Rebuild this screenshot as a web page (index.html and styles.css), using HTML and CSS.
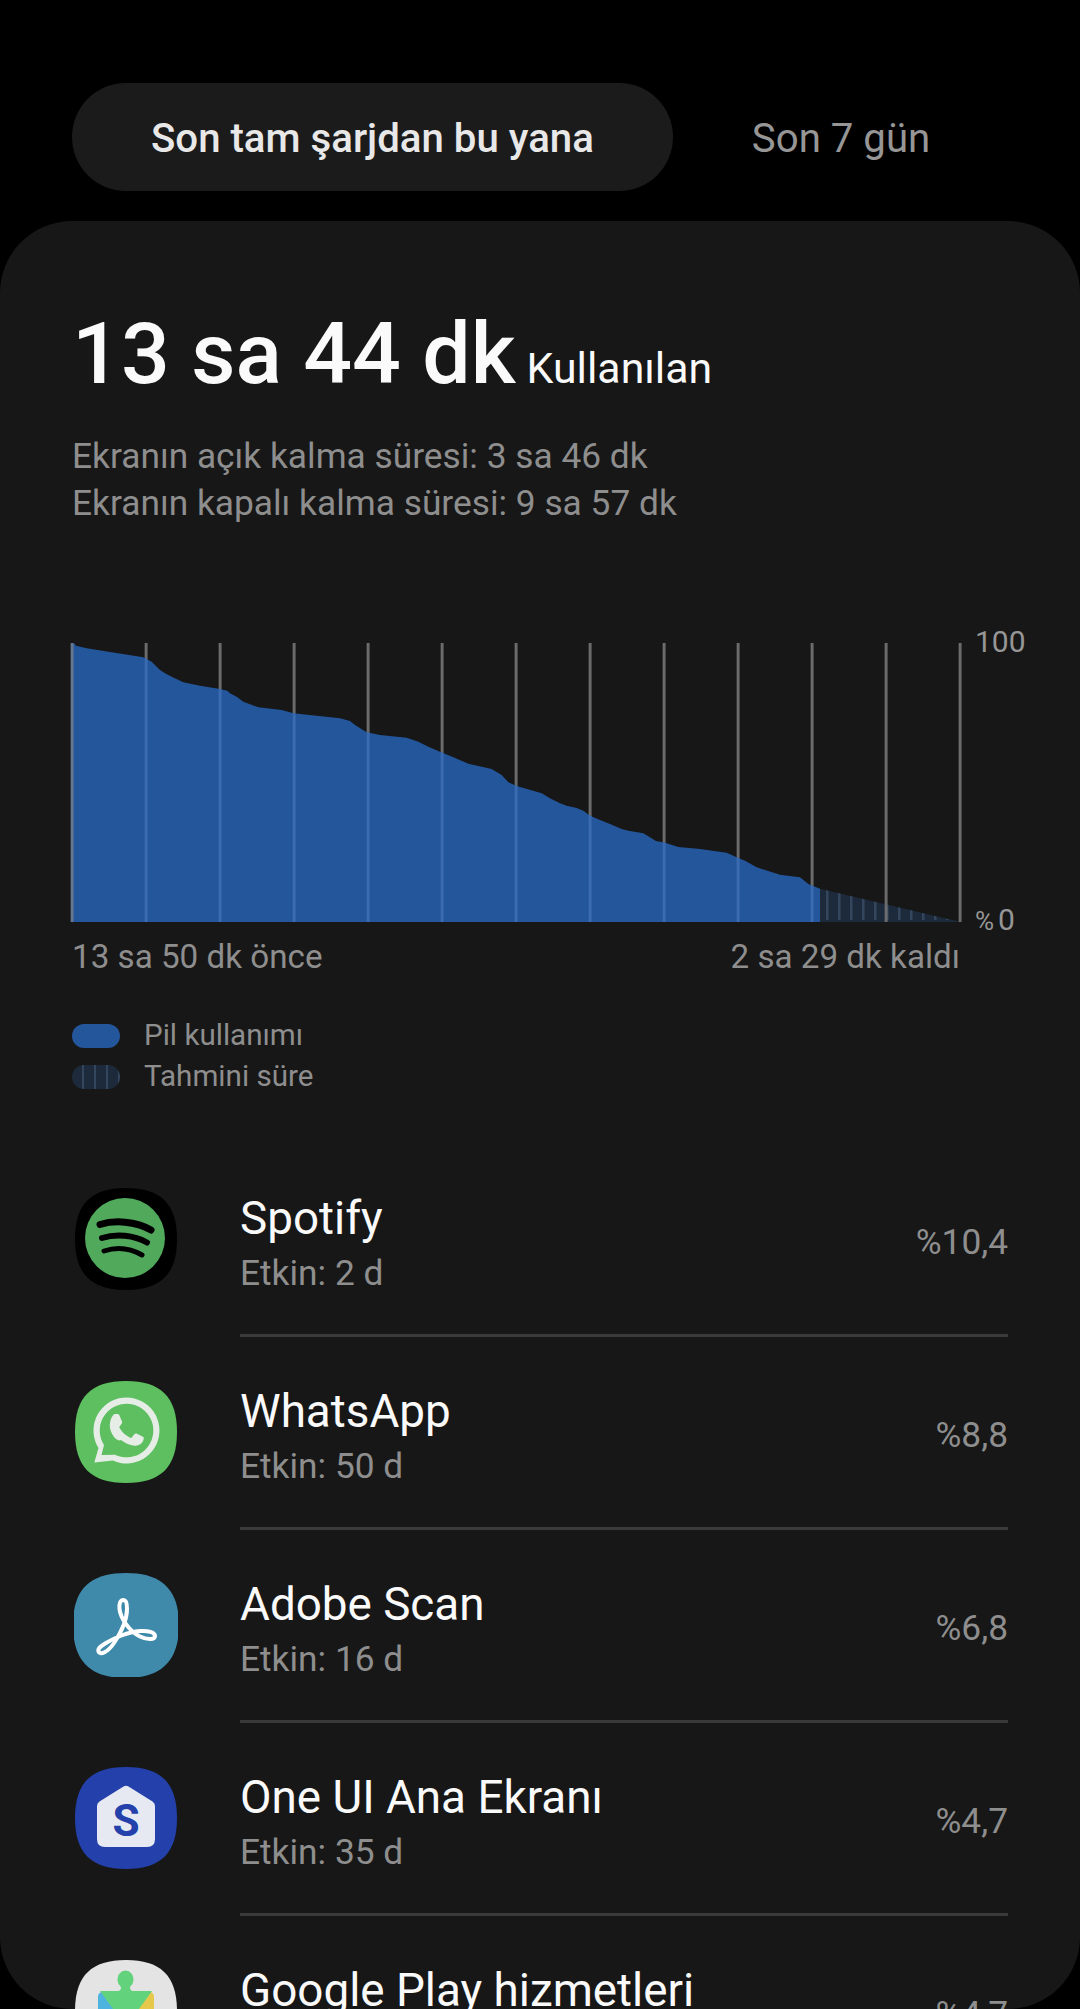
FILE: index.html
```html
<!DOCTYPE html>
<html lang="tr">
<head>
    <meta charset="UTF-8">
    <meta name="viewport" content="width=device-width, initial-scale=1.0">
    <title>Pil kullanımı</title>
    <link rel="stylesheet" href="styles.css">
</head>
<body>
    <div class="tabs">
        <div class="tab tab-active">Son tam şarjdan bu yana</div>
        <div class="tab">Son 7 gün</div>
    </div>

    <div class="card">
        <div class="total">
            <span class="total-time">13 sa 44 dk</span>
            <span class="total-label">Kullanılan</span>
        </div>
        <div class="screen-times">
            <div>Ekranın açık kalma süresi: 3 sa 46 dk</div>
            <div>Ekranın kapalı kalma süresi: 9 sa 57 dk</div>
        </div>

        <div class="chart">
            <!-- viewBox is 3x page pixels -->
            <svg class="plot" width="892" height="279" viewBox="60 69 2676 837">
                <defs>
                    <pattern id="gridGrey" x="62" y="69" width="222" height="837" patternUnits="userSpaceOnUse">
                        <rect width="8.5" height="837" fill="#6e6e6e"/>
                    </pattern>
                    <pattern id="gridBlue" x="62" y="69" width="222" height="837" patternUnits="userSpaceOnUse">
                        <rect width="8.5" height="837" fill="#3b6bb0"/>
                    </pattern>
                    <pattern id="stripes" x="2328" y="69" width="36" height="837" patternUnits="userSpaceOnUse">
                        <rect width="7.5" height="837" fill="#33465e"/>
                    </pattern>
                    <clipPath id="usedClip">
                        <path d="M62 69L72 70L78 77L110 85L180 96L280 112L305 125L330 150L345 160L365 170L400 187L450 197L510 207L532 212L540 220L560 230L580 245L625 262L695 270L730 280L800 287L870 295L900 303L915 315L950 337L990 345L1070 353L1105 365L1135 380L1170 395L1210 412L1255 431L1325 447L1355 465L1375 487L1400 498L1475 520L1500 535L1530 550L1550 557L1580 564L1600 572L1620 587L1650 600L1680 612L1715 627L1735 632L1780 640L1818 663L1845 668L1885 681L1950 687L2030 698L2065 714L2085 722L2120 742L2190 764L2250 772L2275 792L2310 806L2310 906L62 906Z"/>
                    </clipPath>
                    <clipPath id="leftClip">
                        <path d="M2310 806L2730 906L2310 900Z"/>
                    </clipPath>
                </defs>
                <path d="M2310 806L2732 906L2310 906Z" fill="#1c2a3c"/>
                <rect x="2310" y="69" width="426" height="831" fill="url(#stripes)" clip-path="url(#leftClip)"/>
                <rect x="60" y="69" width="2676" height="837" fill="url(#gridGrey)"/>
                <g clip-path="url(#usedClip)">
                    <rect x="60" y="69" width="2676" height="837" fill="#24569c"/>
                    <rect x="71" y="69" width="2676" height="837" fill="url(#gridBlue)"/>
                    <rect x="62" y="69" width="8.5" height="837" fill="#66768c"/>
                </g>
            </svg>
            <div class="axis">
                <span>100</span>
                <span><span class="axis-percent">%</span>0</span>
            </div>
        </div>
        <div class="chart-range">
            <span>13 sa 50 dk önce</span>
            <span>2 sa 29 dk kaldı</span>
        </div>

        <div class="legend">
            <div class="legend-row"><span class="swatch swatch-used"></span>Pil kullanımı</div>
            <div class="legend-row"><span class="swatch swatch-left"></span>Tahmini süre</div>
        </div>

        <div class="app-row">
            <svg class="app-icon" viewBox="0 0 104 104">
                <path d="M52 1C87 1 103 17 103 52S87 103 52 103 1 87 1 52 17 1 52 1Z" fill="#000"/>
                <circle cx="51" cy="51" r="40" fill="#51a95c"/>
                <g fill="none" stroke="#000" stroke-linecap="round">
                    <path d="M26 37.5C40 33 62 34 77 43" stroke-width="7"/>
                    <path d="M28 51C42 46.500 60 48 73 55.500" stroke-width="6"/>
                    <path d="M30 64C42 60 56 61 68 68" stroke-width="5"/>
                </g>
            </svg>
            <div class="app-body">
                <div class="app-text">
                    <div class="app-name">Spotify</div>
                    <div class="app-time">Etkin: 2 d</div>
                </div>
                <div class="app-percent">%10,4</div>
            </div>
        </div>

        <div class="app-row">
            <svg class="app-icon" viewBox="0 0 104 104">
                <path d="M52 1C87 1 103 17 103 52S87 103 52 103 1 87 1 52 17 1 52 1Z" fill="#5dbf60"/>
                <path fill-rule="evenodd" fill="#e6ece6" d="M20.300 82.500L24.500 68A33 33 0 1 1 39 80.600ZM27.500 75L30 65A26.800 26.800 0 1 1 41 74.700Z"/>
                <path fill="#e6ece6" d="M41 34h2.500c1 0 1.600.5 2 1.500l2.500 6c.3.8.2 1.500-.3 2.200l-2 2.500c-.5.6-.5 1.200-.1 1.900 2.500 4.300 6 7.500 10.500 9.600.7.3 1.300.2 1.800-.4l2.600-3.200c.5-.7 1.200-.8 2-.5l6 2.900c.9.4 1.300 1 1.200 2-.2 4-3.800 7-8.300 7.200-3.500.2-9-1.500-14.500-5.600C42.500 62 37 54 36 48c-.7-5 .8-10 3.300-13 .5-.6 1-1 1.700-1z"/>
            </svg>
            <div class="app-body">
                <div class="app-text">
                    <div class="app-name">WhatsApp</div>
                    <div class="app-time">Etkin: 50 d</div>
                </div>
                <div class="app-percent">%8,8</div>
            </div>
        </div>

        <div class="app-row">
            <svg class="app-icon" viewBox="0 0 104 104">
                <path d="M52 0C88 0 105 17 105 52S88 105 52 105-1 88-1 52 16 0 52 0Z" fill="#3f8aab"/>
                <path fill="none" stroke="#fff" stroke-width="4" d="M24.500 78.500C26 83 34 79 40 70C46 61 53 47 53 36C53 30 52 27 49.500 27C46 27 45 31 45.500 36C46.500 45 55 58 66 63.500C73 67 81 67 81 63C81 59 74 57.500 66 58C54 59 40 65 32 70C27 73 23.500 75.500 24.500 78.500Z"/>
            </svg>
            <div class="app-body">
                <div class="app-text">
                    <div class="app-name">Adobe Scan</div>
                    <div class="app-time">Etkin: 16 d</div>
                </div>
                <div class="app-percent">%6,8</div>
            </div>
        </div>

        <div class="app-row">
            <svg class="app-icon" viewBox="0 0 104 104">
                <path d="M52 1C87 1 103 17 103 52S87 103 52 103 1 87 1 52 17 1 52 1Z" fill="#2340ab"/>
                <path fill="#e6e9f2" d="M49.500 20.500Q52 19 54.500 20.500L78.500 35.500Q81 37 81 40V73Q81 81 73 81H31Q23 81 23 73V40Q23 37 25.500 35.500Z"/>
                <text class="home-s" x="52" y="70" text-anchor="middle">S</text>
            </svg>
            <div class="app-body">
                <div class="app-text">
                    <div class="app-name">One UI Ana Ekranı</div>
                    <div class="app-time">Etkin: 35 d</div>
                </div>
                <div class="app-percent">%4,7</div>
            </div>
        </div>

        <div class="app-row">
            <svg class="app-icon" viewBox="0 0 104 104">
                <path d="M52 1C87 1 103 17 103 52S87 103 52 103 1 87 1 52 17 1 52 1Z" fill="#e4e4e4"/>
                <path fill="#4fb3e0" d="M24 38Q24 33 29 33H52V80H24Z"/>
                <path fill="#e6c84b" d="M52 33H75Q80 33 80 38V80H52Z"/>
                <path fill="#62d27c" d="M26 32H44Q47 32 47 28A8 9 0 1 1 56 28Q56 32 59 32H78L52 68Z"/>
            </svg>
            <div class="app-body">
                <div class="app-text">
                    <div class="app-name">Google Play hizmetleri</div>
                    <div class="app-time"></div>
                </div>
                <div class="app-percent">%4,7</div>
            </div>
        </div>
    </div>
</body>
</html>
```

FILE: styles.css
```css
html, body {
    margin: 0;
    height: 2009px;
    overflow: hidden;
    background-color: #000;
}
body {
    font-family: Roboto, "Liberation Sans", sans-serif;
    color: #8e8e8e;
}
.tabs {
    display: flex;
    padding: 83px 0 0 72px;
}
.tab {
    padding: 0 79px;
    height: 108px;
    line-height: 112px;
    font-size: 40.2px;
    color: #969696;
    white-space: nowrap;
}
.tab-active {
    background-color: #1b1b1b;
    border-radius: 54px;
    font-weight: 500;
    color: #e8e8e8;
}
.card {
    margin-top: 30px;
    height: 1788px;
    box-sizing: border-box;
    padding: 83px 72px 0;
    background-color: #171717;
    border-radius: 72px;
    overflow: hidden;
}
.total {
    display: flex;
    align-items: baseline;
    gap: 11px;
    height: 100px;
    line-height: 100px;
    color: #fafafa;
}
.total-time {
    font-size: 86px;
    font-weight: 500;
}
.total-label {
    font-size: 42.8px;
}
.screen-times {
    margin-top: 29px;
    font-size: 35.3px;
    line-height: 47px;
    white-space: nowrap;
}
.chart {
    display: flex;
    margin: 116px 0 0 -2px;
}
.plot {
    display: block;
    flex: none;
}
.axis {
    display: flex;
    flex-direction: column;
    justify-content: space-between;
    margin: -19px 0 -17px 13px;
    font-size: 30px;
    line-height: 36px;
    color: #969696;
}
.axis-percent {
    font-size: 26px;
    margin-right: 4px;
}
.chart-range {
    display: flex;
    justify-content: space-between;
    width: 888px;
    margin-top: 15px;
    font-size: 33.2px;
    line-height: 40px;
}
.legend {
    margin-top: 38px;
    font-size: 29.6px;
    line-height: 41px;
}
.legend-row {
    display: flex;
    align-items: center;
}
.swatch {
    width: 48px;
    height: 24px;
    margin-right: 24px;
    border-radius: 12px;
}
.swatch-used {
    background-color: #24569c;
}
.swatch-left {
    background: repeating-linear-gradient(90deg, #1c2a3c 0 10px, #33465e 10px 12px);
}
.app-row {
    display: flex;
    align-items: center;
    margin-left: 2px;
}
.legend + .app-row {
    margin-top: 47px;
}
.app-icon {
    flex: none;
    width: 104px;
    height: 104px;
    margin: 0 62px 4px 0;
}
.app-body {
    flex: 1;
    display: flex;
    align-items: center;
    justify-content: space-between;
    box-sizing: border-box;
    height: 193px;
    border-bottom: 3px solid #3a3a3a;
}
.app-text {
    margin-top: 11px;
}
.app-name {
    font-size: 45.8px;
    line-height: 54px;
    color: #fafafa;
    white-space: nowrap;
}
.app-time {
    height: 48px;
    margin-top: 3px;
    font-size: 35.3px;
    line-height: 48px;
}
.app-percent {
    margin-top: 5px;
    font-size: 35.3px;
}
.home-s {
    font-family: Roboto, sans-serif;
    font-size: 44px;
    font-weight: 700;
    fill: #2340ab;
}
```
